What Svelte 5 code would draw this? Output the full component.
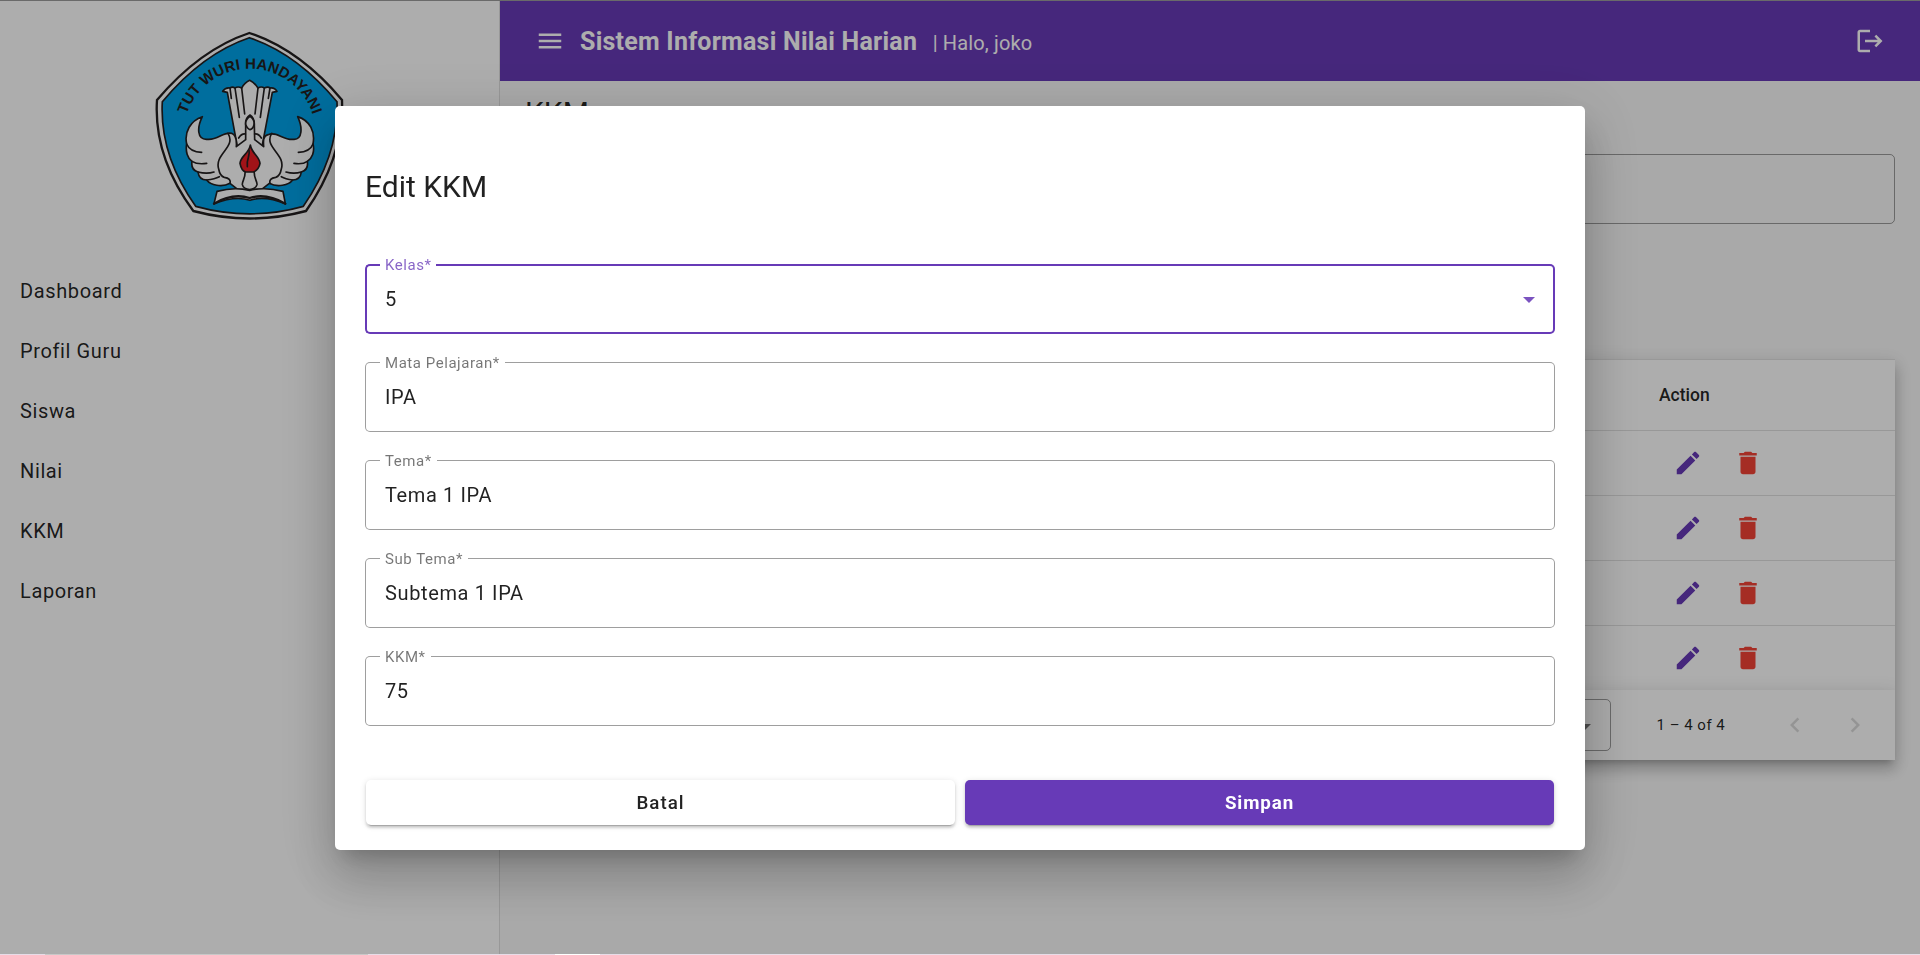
<script>
  const menu = ['Dashboard', 'Profil Guru', 'Siswa', 'Nilai', 'KKM', 'Laporan'];
  const rows = [1, 2, 3, 4];
  const fields = [
    { label: 'Kelas*', value: '5', select: true },
    { label: 'Mata Pelajaran*', value: 'IPA' },
    { label: 'Tema*', value: 'Tema 1 IPA' },
    { label: 'Sub Tema*', value: 'Subtema 1 IPA' },
    { label: 'KKM*', value: '75' }
  ];
</script>

<div class="page">
  <aside>
    <svg class="logo" viewBox="0 0 660 630" width="220" height="210">
      <path d="M328 39Q478 88 606 240Q612 410 498 573Q330 618 160 573Q40 410 51 240Q180 88 328 39Z" fill="#fff" stroke="#231f20" stroke-width="7" />
      <path d="M328 53Q470 100 591 245Q597 405 490 559Q330 604 167 559Q58 405 67 245Q188 100 328 53Z" fill="#00a2e9" stroke="#231f20" stroke-width="5" />
      <path id="motto" d="M140 283A199 199 0 0 1 518 283L522 294" fill="none" />
      <text class="motto"><textPath href="#motto" textLength="499">TUT WURI HANDAYANI</textPath></text>
      <g fill="#fff" stroke="#231f20" stroke-width="5" stroke-linejoin="round" stroke-linecap="round">
        <path d="M292 380L262 217L248 214Q256 202 270 204Q277 199 285 204Q294 198 305 204Q314 188 329 181Q344 188 354 204Q364 198 373 204Q384 199 390 204Q404 202 411 214L397 217L366 380Z" />
        <path d="M285 204L298 292M305 204L314 282M354 204L345 282M373 204L361 292M270 204L274 235M390 204L385 235" fill="none" />
        <path d="M187 290C152 302 132 335 140 372C136 395 143 415 156 424C153 442 160 452 174 456C176 472 186 480 200 480C212 496 246 503 270 490L293 508H365L388 490C412 503 446 496 458 480C472 480 482 472 484 456C498 452 505 442 502 424C516 415 525 395 519 372C526 335 510 302 473 290C488 322 488 360 460 358C430 362 410 332 384 344C368 348 370 366 371 380L344 359L343 316Q344 294 330 285Q315 294 317 316V359L289 380C290 366 291 346 275 340C250 334 232 362 202 358C170 360 171 322 187 290Z" />
        <path d="M140 372Q150 396 185 397M156 424Q172 434 200 430M174 456Q200 463 222 456M200 480Q225 477 238 470M519 372Q510 396 475 397M502 424Q488 434 462 430M484 456Q462 463 438 456M458 480Q436 477 424 470M264 340C290 382 222 402 236 447C239 463 246 470 253 472Q274 475 270 490M395 340C370 382 438 402 424 447C421 463 414 470 407 472Q386 475 390 490M296 354Q305 340 316 342M364 354Q355 340 344 342" fill="none" />
        <path d="M330 289Q316 298 317 313Q321 326 330 329Q340 326 342 313Q344 298 330 289Z" />
        <path d="M231 514Q282 500 329 511Q376 500 429 514L436 551Q374 526 330 541Q286 526 222 551Z" />
        <path d="M222 551Q278 518 329 534Q378 518 436 551" fill="none" stroke-width="7" />
        <path d="M315 450C318 475 306 482 307 494Q310 507 329 509Q348 507 351 494C352 482 340 475 343 450Z" />
        <path d="M331 375C328 399 301 409 300 430Q304 452 317 456H341Q357 448 360 430C358 409 335 400 331 375Z" fill="#ed1c24" />
        <path d="M327 391C332 408 318 417 322 440" fill="none" />
      </g>
    </svg>
    <nav>
      {#each menu as item}
        <a>{item}</a>
      {/each}
    </nav>
  </aside>

  <main>
    <header>
      <span class="iconbtn"><svg viewBox="0 0 24 24"><path d="M3 18h18v-2H3v2zm0-5h18v-2H3v2zm0-7v2h18V6H3z" /></svg></span>
      <h1>Sistem Informasi Nilai Harian</h1>
      <span class="hello">| Halo, joko</span>
      <span class="iconbtn end"><svg viewBox="0 0 24 24"><path d="M17 7l-1.41 1.41L18.17 11H8v2h10.17l-2.58 2.58L17 17l5-5zM4 5h8V3H4c-1.1 0-2 .9-2 2v14c0 1.1.9 2 2 2h8v-2H4V5z" /></svg></span>
    </header>
    <div class="content">
      <h2>KKM</h2>
      <div class="filter"></div>
      <section class="card">
        <div class="thead"><span>Action</span></div>
        {#each rows as row}
          <div class="tr">
            <span class="iconbtn edit"><svg viewBox="0 0 24 24"><path d="M3 17.25V21h3.75L17.81 9.94l-3.75-3.75L3 17.25zM20.71 7.04c.39-.39.39-1.02 0-1.41l-2.34-2.34c-.39-.39-1.02-.39-1.41 0l-1.83 1.83 3.75 3.75 1.83-1.83z" /></svg></span>
            <span class="iconbtn del"><svg viewBox="0 0 24 24"><path d="M6 19c0 1.1.9 2 2 2h8c1.1 0 2-.9 2-2V7H6v12zM19 4h-3.5l-1-1h-5l-1 1H5v2h14V4z" /></svg></span>
          </div>
        {/each}
        <div class="pager">
          <span class="size"><i></i></span>
          <span class="range">1 – 4 of 4</span>
          <span class="iconbtn"><svg viewBox="0 0 24 24"><path d="M15.41 7.41 14 6l-6 6 6 6 1.41-1.41L10.83 12z" /></svg></span>
          <span class="iconbtn"><svg viewBox="0 0 24 24"><path d="M10 6 8.59 7.41 13.17 12l-4.58 4.59L10 18l6-6z" /></svg></span>
        </div>
      </section>
    </div>
  </main>
</div>

<div class="backdrop">
  <div class="dialog" role="dialog">
    <h2>Edit KKM</h2>
    <form>
      {#each fields as f}
        <div class="field" class:focused={f.select}>
          <div class="outline">
            <span class="start"></span>
            <span class="notch"><label>{f.label}</label></span>
            <span class="rest"></span>
          </div>
          <div class="value">
            <span>{f.value}</span>
            {#if f.select}<i class="arrow"></i>{/if}
          </div>
        </div>
      {/each}
    </form>
    <div class="actions">
      <button>Batal</button>
      <button class="primary">Simpan</button>
    </div>
  </div>
</div>
<div class="edge"></div>

<style>
  :global(body) {
    overflow: hidden;
    background: #fff;
    font-family: Roboto, sans-serif;
  }
  * {
    box-sizing: border-box;
  }
  .page {
    display: flex;
    height: 954px;
    border-top: 1px solid #9c9c9c;
    background: #fafafa;
    color: rgba(0, 0, 0, 0.87);
  }
  aside {
    width: 500px;
    border-right: 1px solid rgba(0, 0, 0, 0.12);
    background: #fff;
    padding-top: 19px;
  }
  .logo {
    display: block;
    margin: 0 auto;
    position: relative;
    left: 0.5px;
  }
  .motto {
    font: bold 45px 'Liberation Sans', sans-serif;
    fill: #231f20;
  }
  nav {
    margin-top: 31px;
  }
  nav a {
    display: flex;
    align-items: center;
    height: 60px;
    padding-left: 20px;
    font-size: 20px;
    letter-spacing: 0.625px;
  }
  main {
    flex: 1;
  }
  header {
    display: flex;
    align-items: center;
    height: 80px;
    padding: 0 20px;
    background: #673ab7;
    color: #fff;
  }
  .iconbtn {
    display: flex;
    align-items: center;
    justify-content: center;
    width: 60px;
    height: 60px;
    flex: none;
  }
  .iconbtn svg {
    width: 30px;
    height: 30px;
    fill: currentColor;
  }
  .end {
    margin-left: auto;
  }
  h1 {
    margin: 0;
    font-size: 25px;
    font-weight: 700;
    letter-spacing: 0.24px;
  }
  .hello {
    margin: 3px 0 0 15.5px;
    font-size: 20px;
    letter-spacing: 0.15px;
  }
  .content {
    padding: 12px 25px 0;
  }
  h2 {
    margin: 0;
    font-size: 30px;
    line-height: 40px;
    font-weight: 400;
  }
  .filter {
    height: 70px;
    margin-top: 21px;
    border: 1px solid rgba(0, 0, 0, 0.38);
    border-radius: 5px;
  }
  .card {
    margin-top: 135px;
    height: 401px;
    background: #fff;
    border-top: 1px solid rgba(0, 0, 0, 0.12);
    box-shadow: 0 6px 6px -4px rgba(0, 0, 0, 0.2), 0 10px 12.5px 1px rgba(0, 0, 0, 0.14), 0 4px 17.5px 2.5px rgba(0, 0, 0, 0.12);
  }
  .thead,
  .tr {
    display: flex;
    align-items: center;
    padding-left: 1133.3px;
    border-bottom: 1px solid rgba(0, 0, 0, 0.12);
  }
  .thead {
    height: 71px;
    padding-left: 1134px;
    font-size: 17.5px;
    font-weight: 500;
  }
  .tr {
    height: 65px;
  }
  .tr:nth-child(5) {
    height: 64px;
    border: 0;
  }
  .edit {
    color: #673ab7;
  }
  .del {
    color: #f44336;
  }
  .pager {
    display: flex;
    align-items: center;
    justify-content: flex-end;
    height: 70px;
    padding-right: 10px;
    background: #fff;
    font-size: 15px;
    letter-spacing: 0.5px;
    box-shadow: 0 6px 6px -4px rgba(0, 0, 0, 0.2), 0 10px 12.5px 1px rgba(0, 0, 0, 0.14), 0 4px 17.5px 2.5px rgba(0, 0, 0, 0.12);
    clip-path: inset(-20px 0 0 0);
  }
  .pager .iconbtn {
    color: rgba(0, 0, 0, 0.14);
  }
  .size {
    display: flex;
    align-items: center;
    justify-content: flex-end;
    width: 105px;
    height: 52px;
    padding-right: 19px;
    border: 1px solid rgba(0, 0, 0, 0.38);
    border-radius: 5px;
  }
  .size i {
    margin-top: 3px;
    border: 6px solid transparent;
    border-top-color: rgba(0, 0, 0, 0.54);
    border-bottom: 0;
  }
  .range {
    width: 154px;
    padding-left: 45.5px;
  }
  .backdrop {
    position: fixed;
    inset: 0 0 1px;
    display: flex;
    justify-content: center;
    align-items: flex-start;
    padding-top: 106px;
    background: rgba(0, 0, 0, 0.32);
  }
  .dialog {
    width: 1250px;
    height: 744px;
    padding: 61px 30px 0;
    background: #fff;
    border-radius: 5px;
    color: rgba(0, 0, 0, 0.87);
    box-shadow: 0 14px 19px -9px rgba(0, 0, 0, 0.2), 0 30px 47.5px 4px rgba(0, 0, 0, 0.14), 0 11px 57.5px 10px rgba(0, 0, 0, 0.12);
  }
  form {
    display: flex;
    flex-direction: column;
    gap: 28px;
    margin-top: 57px;
  }
  .field {
    display: grid;
    height: 70px;
    --line: rgba(0, 0, 0, 0.38);
    --w: 1px;
    --label: rgba(0, 0, 0, 0.54);
  }
  .focused {
    --line: #673ab7;
    --w: 2px;
    --label: rgba(103, 58, 183, 0.78);
  }
  .outline,
  .value {
    grid-area: 1 / 1;
    display: flex;
  }
  .outline span {
    border: var(--w) solid var(--line);
  }
  .outline .start {
    width: 15px;
    border-right: 0;
    border-radius: 5px 0 0 5px;
  }
  .outline .notch {
    padding: 0 5px;
    border-width: 0 0 var(--w);
  }
  .outline .rest {
    flex: 1;
    border-left: 0;
    border-radius: 0 5px 5px 0;
  }
  label {
    display: block;
    margin-top: -8px;
    font-size: 15px;
    line-height: 18px;
    letter-spacing: 0.55px;
    color: var(--label);
  }
  .value {
    align-items: center;
    justify-content: space-between;
    padding: 0 20px;
    font-size: 20px;
    letter-spacing: 0.625px;
  }
  .arrow {
    margin-top: 1px;
    border: 6.5px solid transparent;
    border-top-color: rgba(103, 58, 183, 0.87);
    border-bottom: 0;
  }
  .actions {
    display: flex;
    gap: 10px;
    margin: 54px 1px 0;
  }
  button {
    flex: 1;
    height: 45px;
    padding: 0;
    border: 0;
    border-radius: 5px;
    background: #fff;
    color: rgba(0, 0, 0, 0.87);
    font: 500 18.75px Roboto, sans-serif;
    letter-spacing: 1px;
    box-shadow: 0 4px 1px -3px rgba(0, 0, 0, 0.2), 0 2.5px 2.5px rgba(0, 0, 0, 0.14), 0 1px 6px rgba(0, 0, 0, 0.12);
  }
  .primary {
    background: #673ab7;
    color: #fff;
    font-weight: 700;
    letter-spacing: 0.9px;
  }
  .edge {
    height: 1px;
    background: linear-gradient(90deg, #e8dce8 45px, #c8c8c8 45px 368px, #e8dce8 368px 555px, #fff 555px 600px, #e8dce8 600px);
  }
</style>
